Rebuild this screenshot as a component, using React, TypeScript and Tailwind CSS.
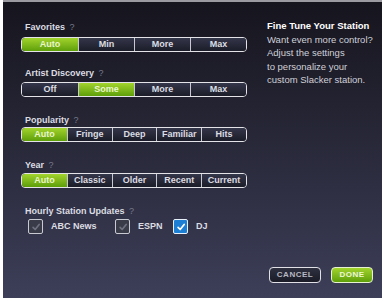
import React from "react";

type SegProps = { options: string[]; selected: number };

function Segmented({ options, selected }: SegProps) {
  return (
    <div
      className={`grid w-[226px] h-[15px] rounded-[4px] border-[1.5px] border-[#e4e4e8] overflow-hidden ${
        options.length === 4 ? "grid-cols-4" : "grid-cols-5"
      }`}
    >
      {options.map((o, i) => (
        <div
          key={o}
          className={`flex items-center justify-center text-[9px] font-bold leading-none ${
            i > 0 ? "border-l border-[#c8c8d0]" : ""
          } ${
            i === selected
              ? "bg-gradient-to-b from-[#a2d42c] to-[#5e9f08] text-[#eaf6cc]"
              : "bg-gradient-to-b from-[#34364a] to-[#1c1d29] text-[#dcdce2]"
          }`}
        >
          {o}
        </div>
      ))}
    </div>
  );
}

function Label({ text }: { text: string }) {
  return (
    <div className="pl-[4px] h-[12px] text-[9px] font-bold leading-[12px] text-[#dcdce2]">
      {text} <span className="ml-[2px] font-normal text-[#777a8c]">?</span>
    </div>
  );
}

function Check({ on }: { on: boolean }) {
  return (
    <div
      className={`flex h-[15px] w-[15px] shrink-0 items-center justify-center border-[1.5px] rounded-[2px] ${
        on ? "bg-[#1d7fd4] border-[#e8f0fa]" : "bg-[#3a3b48] border-[#c9c9d2]"
      }`}
    >
      <svg viewBox="0 0 12 12" className="h-[10px] w-[10px]">
        <path
          d="M2.5 6.5 L5 9 L9.8 3"
          fill="none"
          stroke={on ? "#ffffff" : "#6e7080"}
          strokeWidth="2"
          strokeLinecap="round"
          strokeLinejoin="round"
        />
      </svg>
    </div>
  );
}

export default function App() {
  return (
    <div className="w-[386px] h-[303px] bg-white" style={{ fontFamily: '"Liberation Sans", Arial, sans-serif' }}>
      <div className="ml-[3px] w-[379px] h-[298px] border-t-[2px] border-[#9a9aa0] bg-gradient-to-b from-[#16151e] to-[#3d3f59] flex flex-col">
        <div className="flex pt-[19px] pl-[18px]">
          <div className="flex flex-col w-[226px] shrink-0">
            <Label text="Favorites" />
            <div className="mt-[4px]">
              <Segmented options={["Auto", "Min", "More", "Max"]} selected={0} />
            </div>
            <div className="mt-[15px]">
              <Label text="Artist Discovery" />
            </div>
            <div className="mt-[3px]">
              <Segmented options={["Off", "Some", "More", "Max"]} selected={1} />
            </div>
            <div className="mt-[17px]">
              <Label text="Popularity" />
            </div>
            <div className="mt-[1px]">
              <Segmented options={["Auto", "Fringe", "Deep", "Familiar", "Hits"]} selected={0} />
            </div>
            <div className="mt-[17px]">
              <Label text="Year" />
            </div>
            <div className="mt-[2px]">
              <Segmented options={["Auto", "Classic", "Older", "Recent", "Current"]} selected={0} />
            </div>
            <div className="mt-[17px]">
              <Label text="Hourly Station Updates" />
            </div>
            <div className="mt-[2px] flex items-center pl-[7px] text-[9px] font-bold text-[#dcdce2]">
              <Check on={false} />
              <span className="ml-[8px] w-[64px] shrink-0">ABC News</span>
              <Check on={false} />
              <span className="ml-[8px] w-[35px] shrink-0">ESPN</span>
              <Check on={true} />
              <span className="ml-[8px]">DJ</span>
            </div>
          </div>
          <div className="ml-[20px] -mt-[2px] text-[9.5px] leading-[13.5px] text-[#d0d0d8] whitespace-nowrap">
            <div className="font-bold text-white">Fine Tune Your Station</div>
            <div>Want even more control?</div>
            <div>Adjust the settings</div>
            <div>to personalize your</div>
            <div>custom Slacker station.</div>
          </div>
        </div>
        <div className="flex-1" />
        <div className="flex justify-end gap-[10px] pr-[9px] pb-[15px]">
          <button className="h-[16px] w-[52px] rounded-[4px] border-[1.5px] border-[#e0e0e6] bg-gradient-to-b from-[#2e3040] to-[#1b1c28] text-[8px] font-bold tracking-[0.5px] text-[#b8b8c2]">
            CANCEL
          </button>
          <button className="h-[16px] w-[42px] rounded-[4px] border-[1.5px] border-[#e6f2d0] bg-gradient-to-b from-[#a2d42c] to-[#5e9f08] text-[8px] font-bold tracking-[0.5px] text-[#eef8d8]">
            DONE
          </button>
        </div>
      </div>
    </div>
  );
}
